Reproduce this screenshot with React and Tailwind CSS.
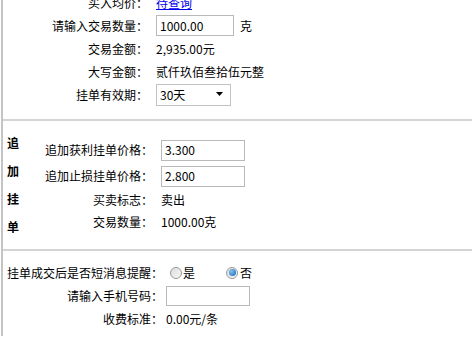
const font = { fontFamily: "'Noto Sans CJK SC', 'Noto Sans', sans-serif" }

const Row = ({ label, width, children, h = "h-[23px]" }) => (
  <div className={`flex items-center ${h}`}>
    <div className="text-right shrink-0 whitespace-nowrap" style={{ width }}>{label}</div>
    <div className="flex items-center">{children}</div>
  </div>
)

const TextBox = ({ value, w, h = "h-[21px]" }) => (
  <div className={`${w} ${h} border border-[#b9b9b9] bg-white flex items-center pl-[3px] text-[12px]`}>
    {value}
  </div>
)

const Radio = ({ checked }) => (
  <span className="inline-flex items-center justify-center w-[12px] h-[12px] rounded-full border border-[#9a9a9a] bg-gradient-to-br from-[#dcdcdc] to-[#f8f8f8]">
    {checked && (
      <span className="w-[7px] h-[7px] rounded-full bg-[radial-gradient(circle_at_35%_35%,#7fc4f5,#1560b5)]" />
    )}
  </span>
)

const Separator = () => <div className="h-[2px] bg-[#d4d4d4]" />

export default function App() {
  return (
    <div className="w-[472px] h-[345px] overflow-hidden bg-white text-[12px] text-black" style={font}>
      <div className="ml-px h-full border-l-2 border-[#c4c4c4]">
        {/* 买入部分 */}
        <div className="-mt-[9px] pb-[13px]">
          <Row label="买入均价：" width="145px">
            <span className="ml-[8px] text-[#0000ee] underline">待查询</span>
          </Row>
          <Row label="请输入交易数量：" width="145px">
            <div className="ml-[8px]"><TextBox value="1000.00" w="w-[78px]" /></div>
            <span className="ml-[6px]">克</span>
          </Row>
          <Row label="交易金额：" width="145px">
            <span className="ml-[8px]">2,935.00元</span>
          </Row>
          <Row label="大写金额：" width="145px">
            <span className="ml-[8px]">贰仟玖佰叁拾伍元整</span>
          </Row>
          <Row label="挂单有效期：" width="145px">
            <div className="ml-[8px] w-[75px] h-[22px] border border-[#c2c2c2] flex items-center justify-between pl-[3px] pr-[6px]">
              <span>30天</span>
              <svg width="8" height="5" viewBox="0 0 8 5"><path d="M0 0h7L3.5 4z" fill="#000" /></svg>
            </div>
          </Row>
        </div>
        <Separator />

        {/* 追加挂单 */}
        <div className="flex items-center pt-[8px] pb-[8px] pl-[4px]">
          <div className="w-[12px] font-bold leading-[28px] flex flex-col">
            <span>追</span>
            <span>加</span>
            <span>挂</span>
            <span>单</span>
          </div>
          <div className="flex flex-col">
            <Row label="追加获利挂单价格：" width="134px" h="h-[26px]">
              <div className="ml-[8px]"><TextBox value="3.300" w="w-[84px]" h="h-[21px]" /></div>
            </Row>
            <Row label="追加止损挂单价格：" width="134px" h="h-[26px]">
              <div className="ml-[8px]"><TextBox value="2.800" w="w-[84px]" h="h-[21px]" /></div>
            </Row>
            <Row label="买卖标志：" width="134px" h="h-[22px]">
              <span className="ml-[8px]">卖出</span>
            </Row>
            <Row label="交易数量：" width="134px" h="h-[22px]">
              <span className="ml-[8px]">1000.00克</span>
            </Row>
          </div>
        </div>
        <Separator />

        {/* 短消息提醒 */}
        <div className="pt-[10px] pl-[4px]">
          <Row label="挂单成交后是否短消息提醒：" width="156px">
            <span className="ml-[7px] flex items-center">
              <Radio />
              <span className="ml-px">是</span>
            </span>
            <span className="ml-[31px] flex items-center">
              <Radio checked />
              <span className="ml-[2px]">否</span>
            </span>
          </Row>
          <Row label="请输入手机号码：" width="156px">
            <div className="ml-[3px]"><TextBox value="" w="w-[84px]" h="h-[20px]" /></div>
          </Row>
          <Row label="收费标准：" width="156px">
            <span className="ml-[3px]">0.00元/条</span>
          </Row>
        </div>
      </div>
    </div>
  )
}
